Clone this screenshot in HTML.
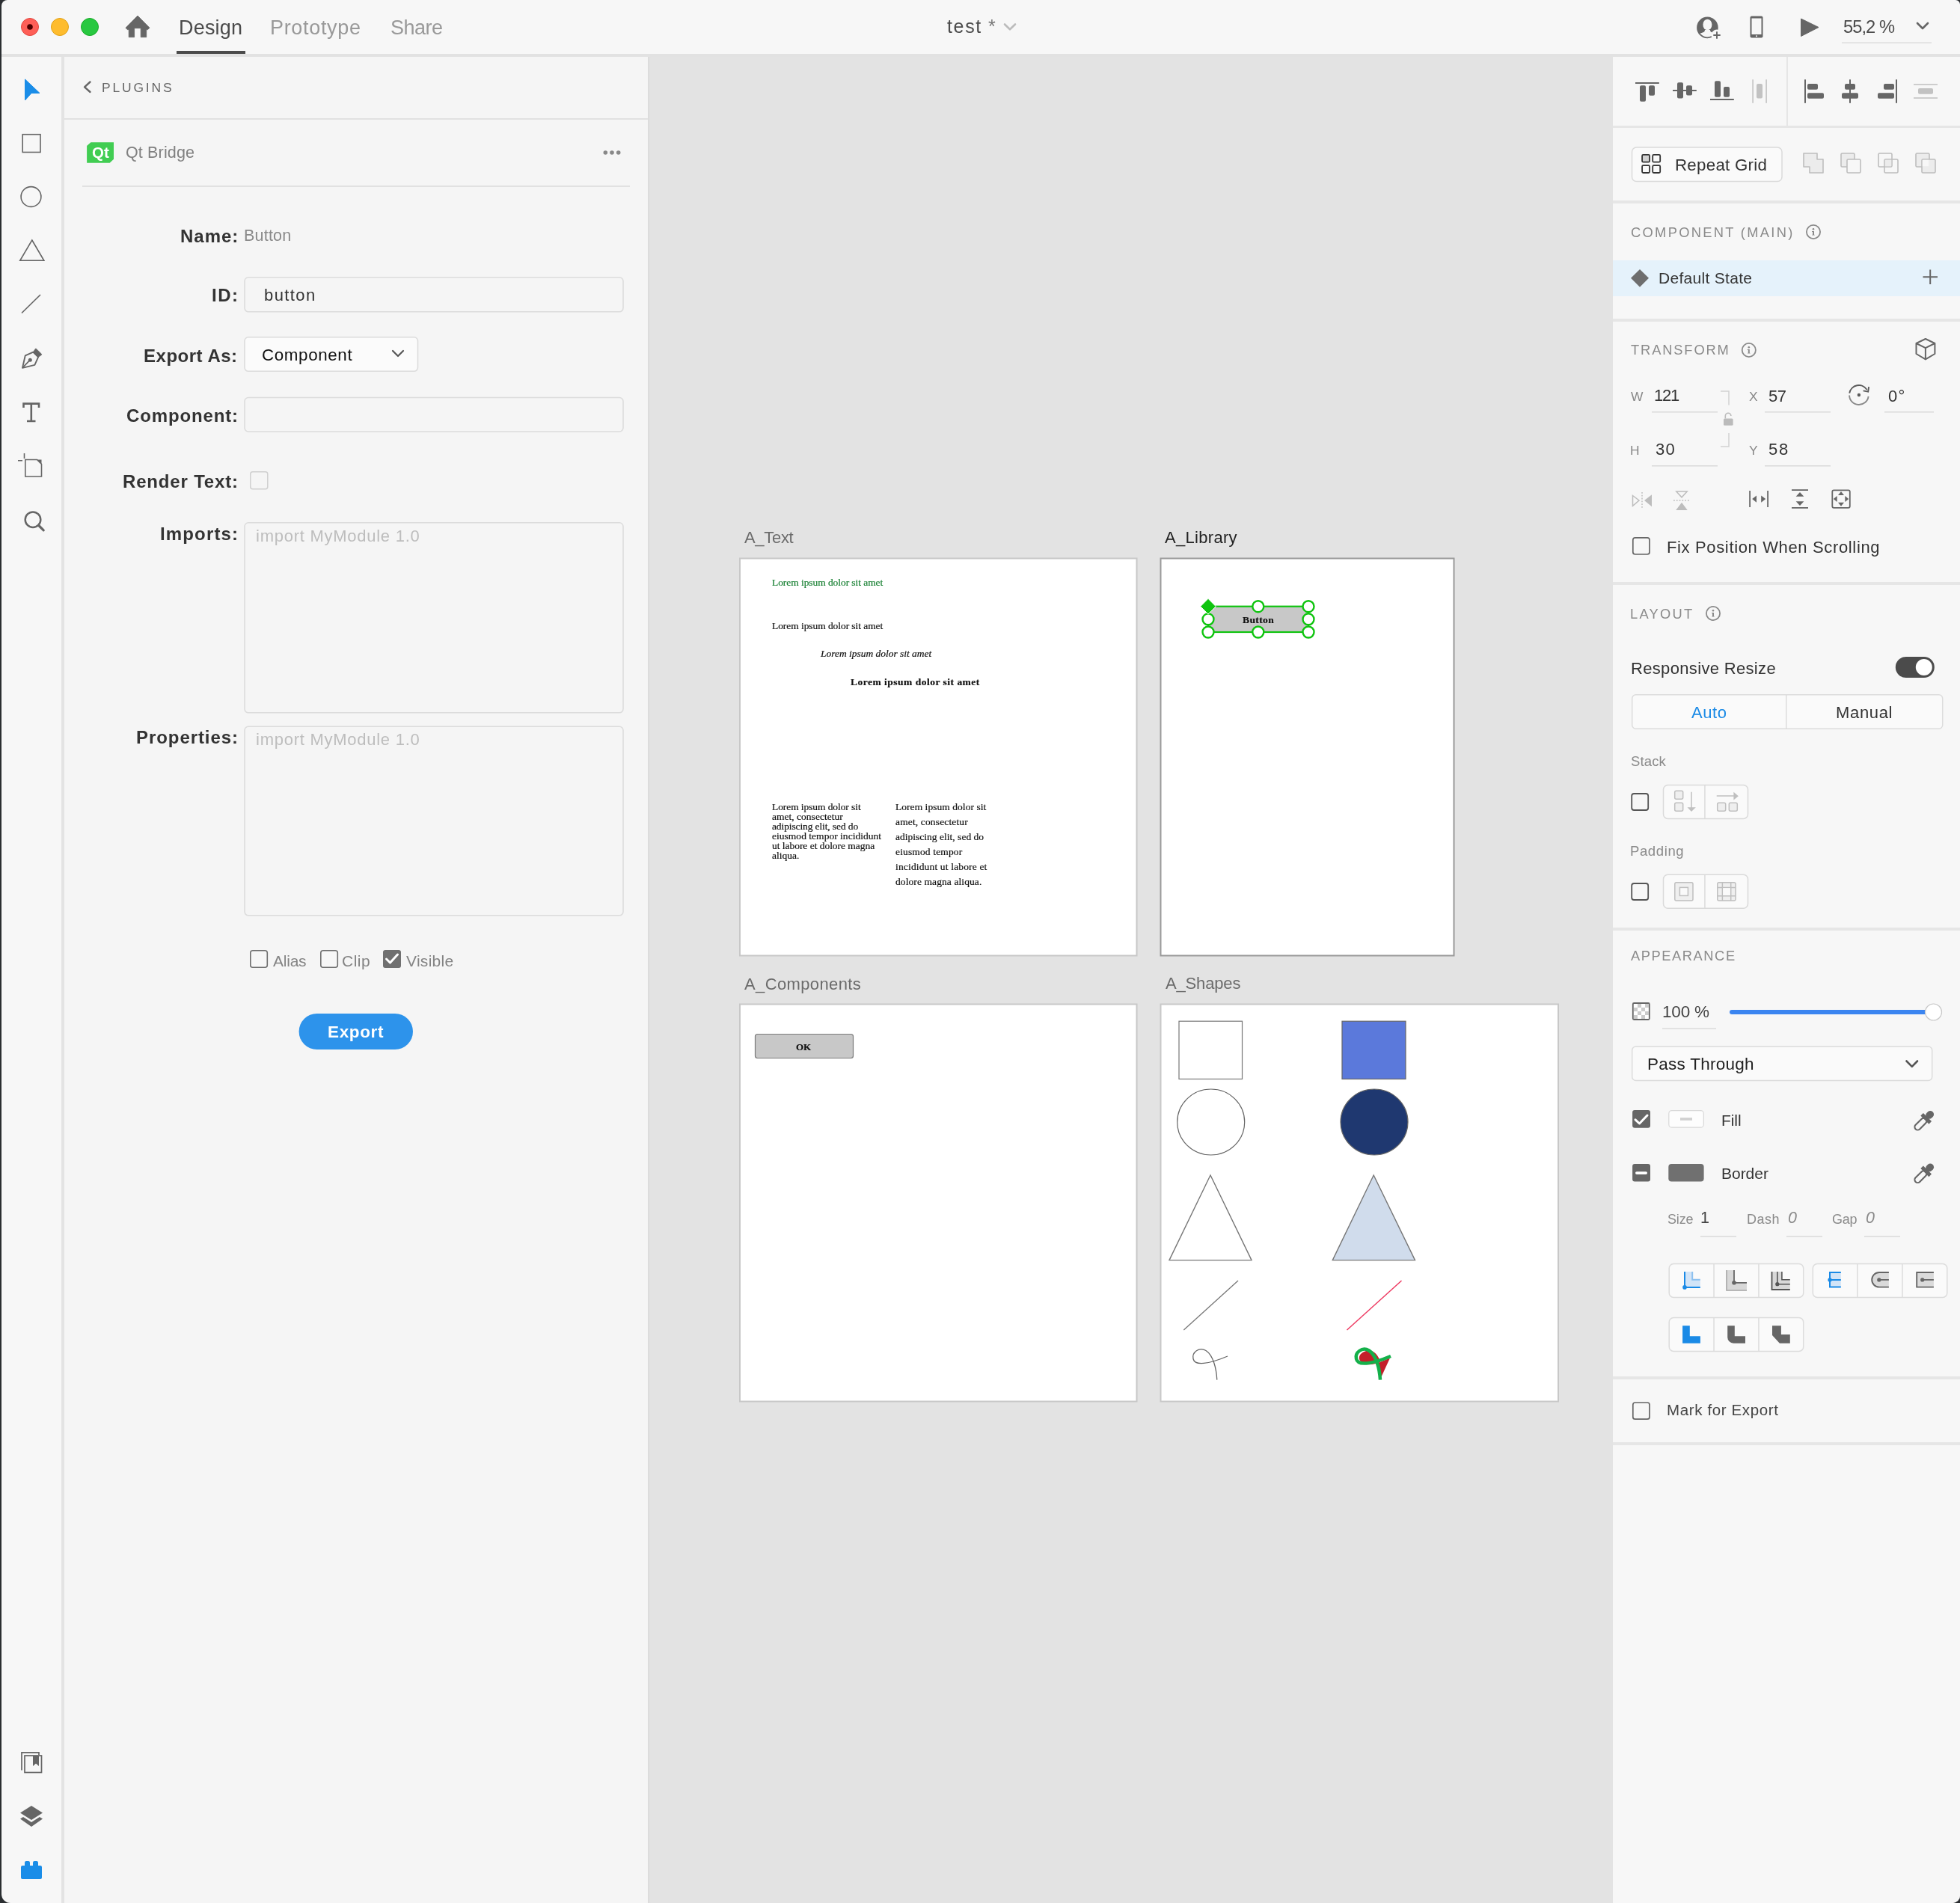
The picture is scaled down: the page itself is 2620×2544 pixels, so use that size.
<!DOCTYPE html>
<html><head><meta charset="utf-8"><title>Adobe XD - test</title>
<style>
html,body{margin:0;padding:0;width:2620px;height:2544px;overflow:hidden;background:#2b2e31;}
body{position:relative;font-family:"Liberation Sans", sans-serif;}
.b{position:absolute;}
.t{position:absolute;white-space:nowrap;will-change:transform;}
svg.ov{position:absolute;left:0;top:0;}
</style></head><body>
<div class="b" style="left:2px;top:0;width:2618px;height:2544px;background:#f7f7f7;border-radius:8px 6px 10px 12px;overflow:hidden">
</div>
<div class="b" style="left:2px;top:72px;width:2618px;height:4px;background:#e2e2e2"></div>
<div class="b" style="left:82px;top:76px;width:4px;height:2468px;background:#e3e3e3"></div>
<div class="b" style="left:86px;top:76px;width:780px;height:2468px;background:#f5f5f5"></div>
<div class="b" style="left:86px;top:158px;width:780px;height:2px;background:#e1e1e1"></div>
<div class="b" style="left:110px;top:248px;width:732px;height:2px;background:#e1e1e1"></div>
<div class="b" style="left:866px;top:76px;width:1290px;height:2468px;background:#e3e3e3;box-shadow:inset 3px 0 3px -2px rgba(0,0,0,0.06)"></div>
<div class="b" style="left:2156px;top:76px;width:464px;height:2468px;background:#f7f7f7;border-bottom-right-radius:10px"></div>
<div class="b" style="left:2156px;top:168px;width:464px;height:3px;background:#e6e6e6"></div>
<div class="b" style="left:2388px;top:76px;width:2px;height:92px;background:#e6e6e6"></div>
<div class="b" style="left:2156px;top:268px;width:464px;height:4px;background:#e6e6e6"></div>
<div class="b" style="left:2156px;top:348px;width:464px;height:48px;background:#e5f2fb"></div>
<div class="b" style="left:2156px;top:426px;width:464px;height:4px;background:#e6e6e6"></div>
<div class="b" style="left:2156px;top:778px;width:464px;height:4px;background:#e6e6e6"></div>
<div class="b" style="left:2156px;top:1240px;width:464px;height:4px;background:#e6e6e6"></div>
<div class="b" style="left:2156px;top:1840px;width:464px;height:4px;background:#e6e6e6"></div>
<div class="b" style="left:2156px;top:1928px;width:464px;height:4px;background:#e6e6e6"></div>

<svg class="ov" width="2620" height="2544" viewBox="0 0 2620 2544">
<!-- traffic lights -->
<circle cx="40" cy="36" r="11.5" fill="#fe5f57" stroke="#e2463f" stroke-width="1"/>
<circle cx="40" cy="36" r="3.8" fill="#4d0000"/>
<circle cx="80" cy="36" r="11.5" fill="#febc2e" stroke="#e1a116" stroke-width="1"/>
<circle cx="120" cy="36" r="11.5" fill="#28c840" stroke="#1aab29" stroke-width="1"/>
<!-- home -->
<path d="M184,21 L200,37.2 L197.5,39.6 L195.7,39.6 L195.7,49.7 L188.2,49.7 L188.2,37.7 L179.6,37.7 L179.6,49.7 L172.2,49.7 L172.2,39.6 L170.2,39.6 L168,37.2 Z" fill="#666" stroke="#666" stroke-width="0.8" stroke-linejoin="round"/>
<!-- design underline -->
<rect x="236" y="68" width="92" height="4" fill="#4b4b4b"/>
<!-- title chevron -->
<path d="M1343,32.5 L1350,39.3 L1357,32.5" fill="none" stroke="#bcbcbc" stroke-width="2.6" stroke-linecap="round" stroke-linejoin="round"/>
<!-- user add -->
<defs>
<clipPath id="uc"><circle cx="2282.4" cy="36.9" r="12.5"/></clipPath>
</defs>
<circle cx="2282.4" cy="36.9" r="14.3" fill="#666"/>
<g clip-path="url(#uc)" fill="#f7f7f7">
<ellipse cx="2282.4" cy="33" rx="6" ry="7.3"/>
<path d="M2279,40 C2279,42 2278,43 2276,43.6 C2271,45 2268,47.5 2266,51 L2299,51 C2297,47.5 2294,45 2289,43.6 C2287,43 2286,42 2286,40 Z"/>
</g>
<circle cx="2295" cy="47" r="7.5" fill="#f7f7f7"/>
<path d="M2290.3,47 L2299.7,47 M2295,42.3 L2295,51.7" stroke="#666" stroke-width="1.9"/>
<!-- phone -->
<rect x="2339.5" y="21.5" width="17" height="29" rx="2" fill="#666"/>
<rect x="2341.5" y="24.5" width="13" height="21.5" fill="#f7f7f7"/>
<circle cx="2348" cy="48.2" r="1" fill="#f7f7f7"/>
<!-- play -->
<path d="M2407.5,25 L2431,36.5 L2407.5,48.5 Z" fill="#666" stroke="#666" stroke-width="1" stroke-linejoin="round"/>
<!-- zoom chevron & underline -->
<path d="M2563,31 L2570,38 L2577,31" fill="none" stroke="#666" stroke-width="2.6" stroke-linecap="round" stroke-linejoin="round"/>
<rect x="2462" y="56.5" width="120" height="1.5" fill="#dcdcdc"/>

<!-- ============ left toolbar ============ -->
<path d="M33.5,106 L53,124.5 L42,124.5 L33.5,134 Z" fill="#1a8de8" stroke="#1a8de8" stroke-width="1" stroke-linejoin="round"/>
<rect x="30.2" y="179.7" width="23.8" height="23.8" fill="none" stroke="#666" stroke-width="1.6"/>
<circle cx="41.5" cy="263" r="13.4" fill="none" stroke="#666" stroke-width="1.6"/>
<path d="M42.8,321 L58.8,348.3 L26.8,348.3 Z" fill="none" stroke="#666" stroke-width="1.6" stroke-linejoin="miter"/>
<path d="M29.5,418 L53.5,394.5" stroke="#666" stroke-width="1.7" stroke-linecap="round"/>
<!-- pen -->
<path d="M30,491.8 L33.8,475.3 L44.5,470.7 L51.2,477.2 L46.4,487.9 Z" fill="none" stroke="#666" stroke-width="1.9" stroke-linejoin="round"/>
<path d="M44.2,471 L47.2,466.3 Q47.8,465.8 48.5,466.3 L55.6,473.3 Q56,474 55.4,474.6 L51.2,477.4 Z" fill="#666" stroke="#666" stroke-width="0.6" stroke-linejoin="round"/>
<circle cx="40.3" cy="481.2" r="2.5" fill="#666"/>
<path d="M40.3,481.2 L30.3,491.3" stroke="#666" stroke-width="1.7"/>
<!-- text T -->
<path d="M31.5,545 L31.5,539.6 L52,539.6 L52,545 M41.8,540 L41.8,563 M36,563 L47.5,563" fill="none" stroke="#666" stroke-width="2.6"/>
<!-- artboard tool -->
<path d="M24,615.8 L30,615.8 M32.5,606 L32.5,613" stroke="#666" stroke-width="1.6"/>
<path d="M33.8,614.5 L49.5,614.5 L55.5,620.5 L55.5,637 L33.8,637 Z" fill="none" stroke="#666" stroke-width="1.6"/>
<path d="M49.5,614.5 L55.5,620.5 L55.5,614.5 Z" fill="#666"/>
<!-- search -->
<circle cx="44" cy="694.7" r="10.3" fill="none" stroke="#666" stroke-width="2.5"/>
<path d="M51.8,702.5 L58.2,708.9" stroke="#666" stroke-width="3.2" stroke-linecap="round"/>
<!-- assets -->
<path d="M29,2366.5 L29,2342.8 L52,2342.8 L52,2346" fill="none" stroke="#666" stroke-width="1.7"/>
<rect x="33" y="2347" width="22.5" height="22.5" fill="#f7f7f7" stroke="#666" stroke-width="1.7"/>
<path d="M44,2347 L52,2347 L52,2361 L48,2357.5 L44,2361 Z" fill="#666"/>
<!-- layers -->
<path d="M42,2414 L57,2423.5 L42,2433 L27,2423.5 Z" fill="#666"/>
<path d="M27,2431.5 L31,2429 L42,2436 L53,2429 L57,2431.5 L42,2442 Z" fill="#666"/>
<!-- plugins (blue) -->
<path d="M30,2494 L33,2494 L33,2490 Q33,2488 35,2488 L38,2488 Q40,2488 40,2490 L40,2494 L44,2494 L44,2490 Q44,2488 46,2488 L49,2488 Q51,2488 51,2490 L51,2494 L54,2494 Q56,2494 56,2496 L56,2510 Q56,2512 54,2512 L30,2512 Q28,2512 28,2510 L28,2496 Q28,2494 30,2494 Z" fill="#1a8de8"/>

<!-- ============ plugin panel ============ -->
<path d="M120.5,109.5 L113,116.3 L120.5,123" fill="none" stroke="#666" stroke-width="2.4" stroke-linecap="round" stroke-linejoin="round"/>
<path d="M121.4,190.2 L152,190.2 L152,212.7 L146.7,217.7 L116.1,217.7 L116.1,195.1 Z" fill="#41cd52"/>
<circle cx="809.3" cy="204" r="2.8" fill="#888"/>
<circle cx="818" cy="204" r="2.8" fill="#888"/>
<circle cx="826.7" cy="204" r="2.8" fill="#888"/>
<!-- inputs -->
<rect x="327" y="370.8" width="506" height="46" rx="5" fill="#f5f5f5" stroke="#dcdcdc" stroke-width="1.6"/>
<rect x="327" y="450.8" width="231.5" height="45.5" rx="5" fill="#fbfbfb" stroke="#dcdcdc" stroke-width="1.6"/>
<path d="M525,469 L532,476 L539,469" fill="none" stroke="#555" stroke-width="2.2" stroke-linecap="round" stroke-linejoin="round"/>
<rect x="327" y="531.5" width="506" height="45.5" rx="5" fill="#f5f5f5" stroke="#dcdcdc" stroke-width="1.6"/>
<rect x="334.8" y="630.8" width="23" height="23" rx="3" fill="#f5f5f5" stroke="#cfcfcf" stroke-width="1.5"/>
<rect x="327" y="698.8" width="506" height="254" rx="5" fill="#f5f5f5" stroke="#dcdcdc" stroke-width="1.6"/>
<rect x="327" y="971.3" width="506" height="252.5" rx="5" fill="#f5f5f5" stroke="#dcdcdc" stroke-width="1.6"/>
<rect x="334.8" y="1270.8" width="22.5" height="22.5" rx="3" fill="#f7f7f7" stroke="#6e6e6e" stroke-width="1.6"/>
<rect x="428.8" y="1270.8" width="22.5" height="22.5" rx="3" fill="#f7f7f7" stroke="#6e6e6e" stroke-width="1.6"/>
<rect x="512" y="1270" width="24" height="24" rx="3" fill="#707070"/>
<path d="M516.5,1282 L521.5,1287 L531.5,1276" fill="none" stroke="#fff" stroke-width="3" stroke-linecap="round" stroke-linejoin="round"/>
<rect x="399.6" y="1355" width="152.4" height="48" rx="24" fill="#2d93eb"/>

<!-- ============ canvas artboards ============ -->
<rect x="989" y="746.5" width="530.5" height="531" fill="#fff" stroke="#c8c8c8" stroke-width="2"/>
<rect x="1551.5" y="746.5" width="392" height="531" fill="#fff" stroke="#9a9a9a" stroke-width="2"/>
<rect x="989" y="1342.5" width="530.5" height="531" fill="#fff" stroke="#c8c8c8" stroke-width="2"/>
<rect x="1551.5" y="1342.5" width="531.5" height="531" fill="#fff" stroke="#c8c8c8" stroke-width="2"/>
<!-- library button w/ selection -->
<rect x="1615" y="810.7" width="134" height="34.3" fill="#c8c8c8"/>
<rect x="1615" y="810.7" width="134" height="34.3" fill="none" stroke="#0fc40f" stroke-width="2.2"/>
<g fill="#fff" stroke="#0fc40f" stroke-width="2.4">
<circle cx="1681.8" cy="810.7" r="7.5"/>
<circle cx="1749" cy="810.7" r="7.5"/>
<circle cx="1615" cy="827.8" r="7.5"/>
<circle cx="1749" cy="827.8" r="7.5"/>
<circle cx="1615" cy="845" r="7.5"/>
<circle cx="1681.8" cy="845" r="7.5"/>
<circle cx="1749" cy="845" r="7.5"/>
</g>
<path d="M1615,800.3 L1625.3,810.7 L1615,821 L1604.7,810.7 Z" fill="#0fc40f" stroke="#fff" stroke-width="1"/>
<!-- OK button -->
<rect x="1009.5" y="1382.5" width="131" height="32" rx="3" fill="#c8c8c8" stroke="#7a7a7a" stroke-width="1.2"/>
<!-- shapes -->
<rect x="1576" y="1365.2" width="84.5" height="77.3" fill="#fff" stroke="#777" stroke-width="1.2"/>
<rect x="1794" y="1365.2" width="85" height="77.3" fill="#5b79db" stroke="#666" stroke-width="1.2"/>
<ellipse cx="1618.7" cy="1500" rx="45" ry="44" fill="#fff" stroke="#666" stroke-width="1.2"/>
<ellipse cx="1837" cy="1500" rx="45" ry="44" fill="#1f3870" stroke="#666" stroke-width="1.2"/>
<path d="M1618,1571 L1673,1684.6 L1563,1684.6 Z" fill="#fff" stroke="#777" stroke-width="1.4" stroke-linejoin="miter"/>
<path d="M1836.2,1571 L1891.5,1684.6 L1781.3,1684.6 Z" fill="#d0dcec" stroke="#777" stroke-width="1.4" stroke-linejoin="miter"/>
<path d="M1582.3,1778 L1655,1712" stroke="#777" stroke-width="1.3"/>
<path d="M1800.5,1778 L1873.5,1712" stroke="#ee3a62" stroke-width="1.5"/>
<path d="M1626.8,1844.6 C1626,1830 1622,1812 1612,1805.5 C1603,1800 1593,1808 1595,1816.5 C1597,1826 1615,1824 1641,1813" fill="none" stroke="#666" stroke-width="1.3"/>
<path d="M1845,1838 C1846,1830 1850,1822 1857,1816 L1845.5,1821 C1842,1812 1838,1806 1830,1805.5 C1822,1805.5 1814,1812 1818,1819 C1822,1826 1835,1825 1845.5,1821 Z" fill="#c41e2a"/>
<path d="M1842.6,1822 L1858,1815.5 L1846.4,1840.8 Z" fill="#c41e2a"/>
<path d="M1845,1844.6 C1844,1830 1840,1812 1830,1805.5 C1821,1800 1811,1808 1813,1816.5 C1815,1826 1833,1824 1859,1813" fill="none" stroke="#14b04a" stroke-width="4.5"/>

<!-- ============ right panel ============ -->
<g fill="#666">
<rect x="2186" y="110" width="31.8" height="2" />
<rect x="2192" y="114.3" width="8" height="21.4" rx="2"/>
<rect x="2204" y="114.3" width="8" height="13.5" rx="2"/>
<rect x="2236" y="120" width="31.8" height="2"/>
<rect x="2242" y="110.2" width="8" height="21.4" rx="2"/>
<rect x="2254" y="114.3" width="8" height="13.3" rx="2"/>
<rect x="2286" y="132" width="31.8" height="2"/>
<rect x="2292" y="108.2" width="8" height="21.6" rx="2"/>
<rect x="2304" y="116" width="8" height="13.8" rx="2"/>
<rect x="2412" y="106.3" width="2" height="31.5"/>
<rect x="2416" y="112" width="14" height="7.7" rx="2"/>
<rect x="2416" y="124.2" width="22" height="7.6" rx="2"/>
<rect x="2472" y="106.3" width="2" height="31.5"/>
<rect x="2466" y="112" width="14" height="7.7" rx="2"/>
<rect x="2462" y="124.2" width="22" height="7.6" rx="2"/>
<rect x="2534" y="106.3" width="2" height="31.5"/>
<rect x="2518" y="112" width="14" height="7.7" rx="2"/>
<rect x="2510" y="124.2" width="22" height="7.6" rx="2"/>
</g>
<g fill="#c2c2c2">
<rect x="2342.3" y="106.3" width="1.6" height="31.5"/>
<rect x="2360.3" y="106.3" width="1.6" height="31.5"/>
<rect x="2348" y="112" width="8" height="19.6" rx="2"/>
<rect x="2558" y="112.2" width="32" height="1.6"/>
<rect x="2558" y="130.2" width="32" height="1.6"/>
<rect x="2564" y="118" width="20" height="7.7" rx="2"/>
</g>
<!-- repeat grid button -->
<rect x="2181.5" y="197" width="200.5" height="45.5" rx="6" fill="#fafafa" stroke="#dadada" stroke-width="1.5"/>
<g stroke="#333" stroke-width="1.8">
<rect x="2195.1" y="206.9" width="10" height="9.8" rx="1.5" fill="#d2d2d2"/>
<rect x="2209.2" y="206.9" width="10" height="9.8" rx="1.5" fill="none"/>
<rect x="2195.1" y="221.2" width="10" height="9.8" rx="1.5" fill="none"/>
<rect x="2209.2" y="221.2" width="10" height="9.8" rx="1.5" fill="none"/>
</g>
<!-- boolean icons -->
<g stroke="#bdbdbd" stroke-width="1.6" fill="#ececec">
<path d="M2411,205 L2429,205 L2429,213 L2437,213 L2437,231 L2419,231 L2419,223 L2411,223 Z" stroke-linejoin="round"/>
<rect x="2461" y="205" width="18" height="18" rx="1.5"/>
<rect x="2469" y="213" width="18" height="18" rx="1.5" fill="#f7f7f7"/>
<rect x="2511" y="205" width="18" height="18" rx="1.5" fill="#f7f7f7"/>
<rect x="2519" y="213" width="18" height="18" rx="1.5" fill="none"/>
<rect x="2519.8" y="213.8" width="8.4" height="8.4" stroke="none" fill="#ececec"/>
<rect x="2561" y="205" width="18" height="18" rx="1.5"/>
<rect x="2569" y="213" width="18" height="18" rx="1.5"/>
<rect x="2569.8" y="213.8" width="8.4" height="8.4" stroke="none" fill="#f7f7f7"/>
</g>
<!-- info icons -->
<g fill="none" stroke="#8a8a8a" stroke-width="1.8">
<circle cx="2424" cy="310" r="9.1"/>
<circle cx="2337.8" cy="468" r="9.1"/>
<circle cx="2290" cy="820" r="9.1"/>
</g>
<g fill="#8a8a8a">
<circle cx="2424" cy="306.2" r="1.3"/><path d="M2422,309 L2425,309 L2425,313.5 L2426,314.6 L2422,314.6 L2423,313.5 L2423,310 L2422,310 Z"/>
<circle cx="2337.8" cy="464.2" r="1.3"/><path d="M2335.8,467 L2338.8,467 L2338.8,471.5 L2339.8,472.6 L2335.8,472.6 L2336.8,471.5 L2336.8,468 L2335.8,468 Z"/>
<circle cx="2290" cy="816.2" r="1.3"/><path d="M2288,819 L2291,819 L2291,823.5 L2292,824.6 L2288,824.6 L2289,823.5 L2289,820 L2288,820 Z"/>
</g>
<!-- default state diamond & plus -->
<path d="M2192,360 L2204,371.8 L2192,383.7 L2180,371.8 Z" fill="#6e6e6e"/>
<path d="M2570.5,370.2 L2590,370.2 M2580.2,360.5 L2580.2,380" stroke="#666" stroke-width="2"/>
<!-- cube -->
<path d="M2573.9,453 L2586.4,459 L2586.4,473 L2573.9,480.4 L2561.5,473 L2561.5,459 Z M2561.5,459 L2573.9,465.2 L2586.4,459 M2573.9,465.2 L2573.9,480.4" fill="none" stroke="#666" stroke-width="2" stroke-linejoin="round"/>
<!-- transform underlines -->
<g fill="#dcdcdc">
<rect x="2208" y="550" width="88" height="1.6"/>
<rect x="2359" y="550" width="88" height="1.6"/>
<rect x="2519" y="550" width="66" height="1.6"/>
<rect x="2208" y="622" width="88" height="1.6"/>
<rect x="2359" y="622" width="88" height="1.6"/>
</g>
<!-- lock bracket -->
<path d="M2300,523 L2311,523 L2311,541.5 M2311,579 L2311,597 L2300,597" fill="none" stroke="#d2d2d2" stroke-width="1.5"/>
<rect x="2304" y="559.4" width="12.6" height="9.4" rx="1.5" fill="#bbb"/>
<path d="M2306.3,559.5 L2306.3,556 A3.8,3.8 0 0 1 2313.9,556" fill="none" stroke="#bbb" stroke-width="1.6"/>
<!-- rotate -->
<path d="M2472.2,525.6 A12.8,12.8 0 0 1 2495.6,521" fill="none" stroke="#5a5a5a" stroke-width="1.9"/>
<path d="M2490.6,522.4 L2497.2,523.6 L2498.1,517.2" fill="none" stroke="#5a5a5a" stroke-width="1.9" stroke-linejoin="miter"/>
<path d="M2472.1,528.4 A12.8,12.8 0 0 0 2497.6,529.8" fill="none" stroke="#8a8a8a" stroke-width="1.9"/>
<circle cx="2484.9" cy="528" r="2.2" fill="#5a5a5a"/>
<!-- flip icons -->
<g fill="#bdbdbd">
<path d="M2182.5,662.5 L2191,669 L2182.5,676.3 Z" fill="none" stroke="#bdbdbd" stroke-width="1.5"/>
<path d="M2198,669 L2208,661.2 L2208,677.2 Z"/>
<path d="M2195,658 L2195,680" stroke="#bdbdbd" stroke-width="1.5" stroke-dasharray="1.8,2"/>
<path d="M2240.8,657 L2255.2,657 L2248,664.8 Z" fill="none" stroke="#bdbdbd" stroke-width="1.5"/>
<path d="M2248,671.8 L2255.7,682.1 L2240.2,682.1 Z"/>
<path d="M2237,669 L2259,669" stroke="#bdbdbd" stroke-width="1.5" stroke-dasharray="1.8,2"/>
</g>
<g fill="#666">
<rect x="2338.2" y="656" width="1.8" height="22"/>
<rect x="2362.2" y="656" width="1.8" height="22"/>
<path d="M2342.2,667.1 L2348,662.5 L2348,671.8 Z"/>
<path d="M2360.2,667.1 L2354.2,662.5 L2354.2,671.8 Z"/>
<rect x="2395" y="654.2" width="22" height="1.8"/>
<rect x="2395" y="678" width="22" height="1.8"/>
<path d="M2406,658 L2411.3,663.7 L2400.7,663.7 Z"/>
<path d="M2406,676 L2411.3,670.2 L2400.7,670.2 Z"/>
<path d="M2461,657.1 L2465,662 L2457,662 Z"/>
<path d="M2461,676.7 L2465,671.8 L2457,671.8 Z"/>
<path d="M2450.8,667 L2455.7,663 L2455.7,671 Z"/>
<path d="M2471.2,667 L2466.3,663 L2466.3,671 Z"/>
</g>
<rect x="2449.3" y="655.3" width="23.5" height="23.5" rx="2" fill="none" stroke="#666" stroke-width="1.8"/>
<!-- checkboxes -->
<rect x="2182.8" y="718.8" width="22.2" height="22.2" rx="3" fill="none" stroke="#666" stroke-width="1.7"/>
<!-- toggle -->
<rect x="2533.8" y="878" width="52" height="28" rx="14" fill="#4b4b4b"/>
<circle cx="2571.8" cy="892" r="11" fill="#fff"/>
<!-- segmented -->
<rect x="2181.7" y="928.8" width="415" height="45.5" rx="5" fill="#fafafa" stroke="#dcdcdc" stroke-width="1.5"/>
<rect x="2387" y="929" width="1.5" height="45" fill="#dcdcdc"/>
<!-- stack/padding -->
<rect x="2181.2" y="1061" width="22" height="22" rx="3" fill="none" stroke="#555" stroke-width="1.8"/>
<rect x="2181.2" y="1181" width="22" height="22" rx="3" fill="none" stroke="#555" stroke-width="1.8"/>
<rect x="2223.5" y="1049.4" width="113" height="45" rx="6" fill="#fafafa" stroke="#dadada" stroke-width="1.5"/>
<rect x="2278.2" y="1049.4" width="1.5" height="45" fill="#dadada"/>
<rect x="2223.5" y="1169.3" width="113" height="45" rx="6" fill="#fafafa" stroke="#dadada" stroke-width="1.5"/>
<rect x="2278.2" y="1169.3" width="1.5" height="45" fill="#dadada"/>
<g stroke="#bfbfbf" stroke-width="1.5" fill="#efefef">
<rect x="2238.7" y="1057.3" width="11" height="11" rx="2"/>
<rect x="2238.7" y="1073.3" width="11" height="11" rx="2"/>
<rect x="2295.7" y="1073.3" width="11" height="11" rx="2"/>
<rect x="2311.3" y="1073.3" width="11" height="11" rx="2"/>
<path d="M2261,1058.8 L2261,1080" fill="none"/>
<path d="M2255.5,1079.3 L2266.8,1079.3 L2261,1085.1 Z" fill="#bfbfbf" stroke="none"/>
<path d="M2294.7,1064 L2318,1064" fill="none"/>
<path d="M2317.4,1058.8 L2323.8,1064.2 L2317.4,1069.5 Z" fill="#bfbfbf" stroke="none"/>
<rect x="2238.8" y="1179.8" width="24.2" height="24.2" rx="2"/>
<rect x="2245.4" y="1186.4" width="11" height="11" fill="#fafafa"/>
<rect x="2295.8" y="1179.8" width="24.2" height="24.2" rx="2"/>
<path d="M2302.4,1180 L2302.4,1204 M2313.7,1180 L2313.7,1204 M2296,1186.4 L2320,1186.4 M2296,1197.8 L2320,1197.8" fill="none"/>
<rect x="2303.2" y="1187.2" width="9.7" height="9.8" stroke="none" fill="#fafafa"/>
</g>
<!-- appearance -->
<rect x="2182.8" y="1341" width="22" height="22" rx="1.5" fill="#fff" stroke="#666" stroke-width="1.8"/>
<g fill="#cccccc">
<rect x="2189" y="1342" width="5" height="5"/><rect x="2199" y="1342" width="5" height="5"/>
<rect x="2184" y="1347" width="5" height="5"/><rect x="2194" y="1347" width="5" height="5"/>
<rect x="2189" y="1352" width="5" height="5"/><rect x="2199" y="1352" width="5" height="5"/>
<rect x="2184" y="1357" width="5" height="5"/><rect x="2194" y="1357" width="5" height="5"/>
</g>
<rect x="2222" y="1374.3" width="72" height="1.6" fill="#dcdcdc"/>
<rect x="2312" y="1350" width="273" height="6" rx="3" fill="#3b85f0"/>
<circle cx="2584.5" cy="1353" r="11" fill="#fff" stroke="#c8c8c8" stroke-width="1.2"/>
<rect x="2181.7" y="1399" width="401" height="45.5" rx="5" fill="#fafafa" stroke="#dcdcdc" stroke-width="1.5"/>
<path d="M2548.5,1418.5 L2555.8,1425.8 L2563,1418.5" fill="none" stroke="#555" stroke-width="2.6" stroke-linecap="round" stroke-linejoin="round"/>
<!-- fill / border -->
<rect x="2182.1" y="1484.1" width="23.9" height="23.7" rx="3" fill="#666"/>
<path d="M2186,1496.8 L2191.5,1502 L2202,1491" fill="none" stroke="#fff" stroke-width="3" stroke-linecap="round" stroke-linejoin="round"/>
<rect x="2230.8" y="1484.6" width="46.5" height="22.6" rx="4" fill="#fdfdfd" stroke="#d8d8d8" stroke-width="1.2"/>
<rect x="2246" y="1494.2" width="16" height="3.6" fill="#d0d0d0"/>
<rect x="2182.1" y="1556" width="23.9" height="23.6" rx="3" fill="#666"/>
<rect x="2186" y="1566.2" width="16" height="3.8" rx="1.9" fill="#fff"/>
<rect x="2230.3" y="1556" width="47.3" height="23.6" rx="4" fill="#707070"/>
<g transform="translate(2572.5,1497.5) rotate(45) scale(1.12)">
<rect x="-3.5" y="-2" width="7" height="17" rx="3.5" fill="none" stroke="#666" stroke-width="1.9"/>
<rect x="-7" y="-5" width="14" height="4.5" fill="#666"/>
<rect x="-4.2" y="-14" width="8.4" height="10" rx="4" fill="#666"/>
</g>
<g transform="translate(2572.5,1568) rotate(45) scale(1.12)">
<rect x="-3.5" y="-2" width="7" height="17" rx="3.5" fill="none" stroke="#666" stroke-width="1.9"/>
<rect x="-7" y="-5" width="14" height="4.5" fill="#666"/>
<rect x="-4.2" y="-14" width="8.4" height="10" rx="4" fill="#666"/>
</g>
<g fill="#dcdcdc">
<rect x="2273" y="1652" width="48" height="1.6"/>
<rect x="2388" y="1652" width="48" height="1.6"/>
<rect x="2492" y="1652" width="48" height="1.6"/>
</g>
<!-- stroke groups -->
<g fill="#fafafa" stroke="#dcdcdc" stroke-width="1.5">
<rect x="2231.2" y="1689.4" width="179.5" height="45" rx="6"/>
<rect x="2423.3" y="1689.4" width="179.5" height="45" rx="6"/>
<rect x="2231.2" y="1761.4" width="179.5" height="45" rx="6"/>
</g>
<g fill="#dcdcdc">
<rect x="2290.3" y="1690" width="1.5" height="44"/><rect x="2350.2" y="1690" width="1.5" height="44"/>
<rect x="2482.1" y="1690" width="1.5" height="44"/><rect x="2542.2" y="1690" width="1.5" height="44"/>
<rect x="2290.3" y="1762" width="1.5" height="44"/><rect x="2350.2" y="1762" width="1.5" height="44"/>
</g>
<!-- inside -->
<path d="M2252,1700 L2262.4,1700 L2262.4,1711 L2272.8,1711 L2272.8,1721.8 L2252,1721.8 Z" fill="#d2e4f7"/>
<path d="M2252,1700 L2252,1720.9 L2272.8,1720.9" fill="none" stroke="#1a8ae6" stroke-width="2"/>
<path d="M2262.2,1700 L2262.2,1710.8 L2272.8,1710.8" fill="none" stroke="#8cc0ef" stroke-width="2"/>
<circle cx="2252" cy="1720.9" r="2.8" fill="#1a8ae6"/>
<!-- center -->
<path d="M2307.3,1698 L2318,1698 L2318,1714.8 L2335,1714.8 L2335,1725.7 L2307.3,1725.7 Z" fill="#d8d8d8"/>
<path d="M2308,1698 L2308,1725 L2335,1725" fill="none" stroke="#aaa" stroke-width="1.6"/>
<path d="M2318,1698 L2318,1714.8 L2335,1714.8" fill="none" stroke="#666" stroke-width="1.8"/>
<circle cx="2318" cy="1714.8" r="2.8" fill="#666"/>
<!-- outside -->
<path d="M2367.6,1700 L2381.9,1700 L2381.9,1710.7 L2392.8,1710.7 L2392.8,1724.7 L2367.6,1724.7 Z" fill="#d8d8d8"/>
<path d="M2368.5,1700 L2368.5,1724 L2392.8,1724" fill="none" stroke="#555" stroke-width="1.8"/>
<path d="M2375.8,1700 L2375.8,1716.7 L2392.8,1716.7" fill="none" stroke="#555" stroke-width="1.6"/>
<path d="M2381.9,1700 L2381.9,1710.7 L2392.8,1710.7" fill="none" stroke="#555" stroke-width="1.6"/>
<circle cx="2375.8" cy="1716.7" r="2.6" fill="#555"/>
<!-- caps -->
<rect x="2446" y="1701" width="14.8" height="19.6" fill="#d2e4f7"/>
<path d="M2460.8,1701 L2446,1701 L2446,1720.6 L2460.8,1720.6 M2446,1710.9 L2460.8,1710.9" fill="none" stroke="#1a8ae6" stroke-width="2"/>
<circle cx="2446" cy="1710.9" r="2.6" fill="#1a8ae6"/>
<path d="M2524.9,1701 L2512,1701 A9.8,9.8 0 0 0 2512,1720.6 L2524.9,1720.6" fill="#dadada" stroke="#666" stroke-width="1.9"/>
<path d="M2511.8,1710.9 L2524.9,1710.9" stroke="#666" stroke-width="1.8"/>
<circle cx="2511.8" cy="1710.9" r="2.6" fill="#666"/>
<path d="M2584.9,1701 L2562.2,1701 L2562.2,1720.6 L2584.9,1720.6" fill="#dadada" stroke="#666" stroke-width="1.9"/>
<path d="M2569.7,1710.9 L2584.9,1710.9" stroke="#666" stroke-width="1.8"/>
<circle cx="2569.7" cy="1710.9" r="2.6" fill="#666"/>
<!-- joins -->
<path d="M2249.1,1772.2 L2258.8,1772.2 L2258.8,1786.2 L2272.9,1786.2 L2272.9,1795.7 L2249.1,1795.7 Z" fill="#1a8ae6"/>
<path d="M2309.2,1772.2 L2318.8,1772.2 L2318.8,1786.2 L2333,1786.2 L2333,1795.7 L2317.2,1795.7 A8,8 0 0 1 2309.2,1787.7 Z" fill="#666"/>
<path d="M2369,1772.2 L2380.9,1772.2 L2380.9,1784.1 L2392.8,1784.1 L2392.8,1795.7 L2378.9,1795.7 L2369,1785 Z" fill="#666"/>
<!-- mark for export -->
<rect x="2182.8" y="1875" width="22.2" height="22.2" rx="3" fill="none" stroke="#666" stroke-width="1.7"/>
</svg>

<span class="t" style='left:239.00px;top:23.74px;font-size:27.00px;line-height:27.00px;color:#4b4b4b;letter-spacing:0.194px'>Design</span>
<span class="t" style='left:361.00px;top:23.74px;font-size:27.00px;line-height:27.00px;color:#999999;letter-spacing:0.681px'>Prototype</span>
<span class="t" style='left:522.00px;top:23.74px;font-size:27.00px;line-height:27.00px;color:#999999;letter-spacing:-0.508px'>Share</span>
<span class="t" style='left:1266.00px;top:23.44px;font-size:25.00px;line-height:25.00px;color:#4b4b4b;letter-spacing:1.650px'>test</span>
<span class="t" style='left:1320.80px;top:23.44px;font-size:25.00px;line-height:25.00px;color:#777777'>*</span>
<span class="t" style='left:2463.70px;top:24.54px;font-size:23.70px;line-height:23.70px;color:#4b4b4b;letter-spacing:-0.937px'>55,2 %</span>
<span class="t" style='left:136.00px;top:108.87px;font-size:17.40px;line-height:17.40px;color:#666666;letter-spacing:2.875px'>PLUGINS</span>
<span class="t" style='left:168.00px;top:194.40px;font-size:21.50px;line-height:21.50px;color:#808080;letter-spacing:0.142px'>Qt Bridge</span>
<span class="t" style='left:123.00px;top:194.25px;font-size:20.50px;line-height:20.50px;color:#ffffff;font-weight:700'>Qt</span>
<span class="t" style='left:240.70px;top:304.28px;font-size:24.00px;line-height:24.00px;color:#333333;font-weight:700;letter-spacing:0.983px'>Name:</span>
<span class="t" style='left:326.40px;top:304.90px;font-size:21.50px;line-height:21.50px;color:#8a8a8a;letter-spacing:0.220px'>Button</span>
<span class="t" style='left:283.00px;top:383.28px;font-size:24.00px;line-height:24.00px;color:#333333;font-weight:700;letter-spacing:1.500px'>ID:</span>
<span class="t" style='left:353.00px;top:383.98px;font-size:22.00px;line-height:22.00px;color:#333333;letter-spacing:1.414px'>button</span>
<span class="t" style='left:192.00px;top:464.28px;font-size:24.00px;line-height:24.00px;color:#333333;font-weight:700;letter-spacing:0.516px'>Export As:</span>
<span class="t" style='left:349.60px;top:464.24px;font-size:22.40px;line-height:22.40px;color:#111111;letter-spacing:0.608px'>Component</span>
<span class="t" style='left:169.00px;top:544.28px;font-size:24.00px;line-height:24.00px;color:#333333;font-weight:700;letter-spacing:0.854px'>Component:</span>
<span class="t" style='left:164.00px;top:632.28px;font-size:24.00px;line-height:24.00px;color:#333333;font-weight:700;letter-spacing:0.825px'>Render Text:</span>
<span class="t" style='left:214.00px;top:702.28px;font-size:24.00px;line-height:24.00px;color:#333333;font-weight:700;letter-spacing:1.142px'>Imports:</span>
<span class="t" style='left:341.50px;top:705.98px;font-size:22.00px;line-height:22.00px;color:#bdbdbd;letter-spacing:0.740px'>import MyModule 1.0</span>
<span class="t" style='left:182.00px;top:974.28px;font-size:24.00px;line-height:24.00px;color:#333333;font-weight:700;letter-spacing:0.929px'>Properties:</span>
<span class="t" style='left:341.50px;top:977.98px;font-size:22.00px;line-height:22.00px;color:#bdbdbd;letter-spacing:0.740px'>import MyModule 1.0</span>
<span class="t" style='left:364.50px;top:1273.82px;font-size:21.00px;line-height:21.00px;color:#838383;letter-spacing:-0.229px'>Alias</span>
<span class="t" style='left:457.00px;top:1273.82px;font-size:21.00px;line-height:21.00px;color:#838383;letter-spacing:0.501px'>Clip</span>
<span class="t" style='left:542.50px;top:1273.82px;font-size:21.00px;line-height:21.00px;color:#838383;letter-spacing:0.283px'>Visible</span>
<span class="t" style='left:438.00px;top:1369.05px;font-size:22.50px;line-height:22.50px;color:#ffffff;font-weight:700;letter-spacing:0.647px'>Export</span>
<span class="t" style='left:995.00px;top:708.38px;font-size:22.00px;line-height:22.00px;color:#6b6b6b;letter-spacing:-0.309px'>A_Text</span>
<span class="t" style='left:1557.40px;top:707.98px;font-size:22.00px;line-height:22.00px;color:#222222;letter-spacing:0.306px'>A_Library</span>
<span class="t" style='left:994.60px;top:1304.58px;font-size:22.00px;line-height:22.00px;color:#6b6b6b;letter-spacing:0.378px'>A_Components</span>
<span class="t" style='left:1557.60px;top:1303.98px;font-size:22.00px;line-height:22.00px;color:#6b6b6b;letter-spacing:-0.161px'>A_Shapes</span>
<span class="t" style='left:1032.00px;top:771.89px;font-size:13.50px;line-height:13.50px;color:#167f31;font-family:"Liberation Serif", serif;-webkit-text-stroke:0.2px #167f31;letter-spacing:-0.069px'>Lorem ipsum dolor sit amet</span>
<span class="t" style='left:1032.00px;top:829.79px;font-size:13.50px;line-height:13.50px;color:#111111;font-family:"Liberation Serif", serif;-webkit-text-stroke:0.2px #111111;letter-spacing:-0.069px'>Lorem ipsum dolor sit amet</span>
<span class="t" style='left:1096.50px;top:866.79px;font-size:13.50px;line-height:13.50px;color:#111111;font-family:"Liberation Serif", serif;-webkit-text-stroke:0.2px #111111;font-style:italic;letter-spacing:-0.020px'>Lorem ipsum dolor sit amet</span>
<span class="t" style='left:1136.70px;top:904.59px;font-size:13.50px;line-height:13.50px;color:#111111;font-weight:700;font-family:"Liberation Serif", serif;-webkit-text-stroke:0.2px #111111;letter-spacing:0.494px'>Lorem ipsum dolor sit amet</span>
<span class="t" style='left:1031.70px;top:1071.79px;font-size:13.50px;line-height:13.50px;color:#111111;font-family:"Liberation Serif", serif;-webkit-text-stroke:0.2px #111111;letter-spacing:-0.086px'>Lorem ipsum dolor sit</span>
<span class="t" style='left:1031.70px;top:1084.89px;font-size:13.50px;line-height:13.50px;color:#111111;font-family:"Liberation Serif", serif;-webkit-text-stroke:0.2px #111111;letter-spacing:0.015px'>amet, consectetur</span>
<span class="t" style='left:1031.70px;top:1097.99px;font-size:13.50px;line-height:13.50px;color:#111111;font-family:"Liberation Serif", serif;-webkit-text-stroke:0.2px #111111;letter-spacing:-0.117px'>adipiscing elit, sed do</span>
<span class="t" style='left:1031.70px;top:1111.09px;font-size:13.50px;line-height:13.50px;color:#111111;font-family:"Liberation Serif", serif;-webkit-text-stroke:0.2px #111111;letter-spacing:0.024px'>eiusmod tempor incididunt</span>
<span class="t" style='left:1031.70px;top:1124.19px;font-size:13.50px;line-height:13.50px;color:#111111;font-family:"Liberation Serif", serif;-webkit-text-stroke:0.2px #111111;letter-spacing:-0.031px'>ut labore et dolore magna</span>
<span class="t" style='left:1031.70px;top:1137.29px;font-size:13.50px;line-height:13.50px;color:#111111;font-family:"Liberation Serif", serif;-webkit-text-stroke:0.2px #111111'>aliqua.</span>
<span class="t" style='left:1197.40px;top:1071.79px;font-size:13.50px;line-height:13.50px;color:#111111;font-family:"Liberation Serif", serif;-webkit-text-stroke:0.2px #111111;letter-spacing:0.044px'>Lorem ipsum dolor sit</span>
<span class="t" style='left:1197.40px;top:1091.79px;font-size:13.50px;line-height:13.50px;color:#111111;font-family:"Liberation Serif", serif;-webkit-text-stroke:0.2px #111111;letter-spacing:0.140px'>amet, consectetur</span>
<span class="t" style='left:1197.40px;top:1111.79px;font-size:13.50px;line-height:13.50px;color:#111111;font-family:"Liberation Serif", serif;-webkit-text-stroke:0.2px #111111;letter-spacing:0.015px'>adipiscing elit, sed do</span>
<span class="t" style='left:1197.40px;top:1131.79px;font-size:13.50px;line-height:13.50px;color:#111111;font-family:"Liberation Serif", serif;-webkit-text-stroke:0.2px #111111;letter-spacing:0.141px'>eiusmod tempor</span>
<span class="t" style='left:1197.40px;top:1151.79px;font-size:13.50px;line-height:13.50px;color:#111111;font-family:"Liberation Serif", serif;-webkit-text-stroke:0.2px #111111;letter-spacing:0.159px'>incididunt ut labore et</span>
<span class="t" style='left:1197.40px;top:1171.79px;font-size:13.50px;line-height:13.50px;color:#111111;font-family:"Liberation Serif", serif;-webkit-text-stroke:0.2px #111111;letter-spacing:0.089px'>dolore magna aliqua.</span>
<span class="t" style='left:1660.50px;top:821.79px;font-size:13.50px;line-height:13.50px;color:#111111;font-weight:700;font-family:"Liberation Serif", serif;-webkit-text-stroke:0.2px #111111;letter-spacing:0.389px'>Button</span>
<span class="t" style='left:1064.00px;top:1392.71px;font-size:13.00px;line-height:13.00px;color:#111111;font-weight:700;font-family:"Liberation Serif", serif;-webkit-text-stroke:0.2px #111111'>OK</span>
<span class="t" style='left:2238.80px;top:209.62px;font-size:22.30px;line-height:22.30px;color:#333333;letter-spacing:0.268px'>Repeat Grid</span>
<span class="t" style='left:2180.40px;top:301.91px;font-size:18.30px;line-height:18.30px;color:#8a8a8a;letter-spacing:2.327px'>COMPONENT (MAIN)</span>
<span class="t" style='left:2216.70px;top:361.12px;font-size:21.00px;line-height:21.00px;color:#333333;letter-spacing:0.298px'>Default State</span>
<span class="t" style='left:2180.40px;top:459.41px;font-size:18.30px;line-height:18.30px;color:#8a8a8a;letter-spacing:1.882px'>TRANSFORM</span>
<span class="t" style='left:2180.40px;top:521.67px;font-size:17.40px;line-height:17.40px;color:#888888'>W</span>
<span class="t" style='left:2211.00px;top:518.48px;font-size:22.00px;line-height:22.00px;color:#333333;letter-spacing:-1.235px'>121</span>
<span class="t" style='left:2338.00px;top:521.77px;font-size:17.40px;line-height:17.40px;color:#888888'>X</span>
<span class="t" style='left:2364.40px;top:518.98px;font-size:22.00px;line-height:22.00px;color:#333333;letter-spacing:-0.435px'>57</span>
<span class="t" style='left:2523.80px;top:518.98px;font-size:22.00px;line-height:22.00px;color:#333333;letter-spacing:1.265px'>0°</span>
<span class="t" style='left:2179.40px;top:593.87px;font-size:17.40px;line-height:17.40px;color:#888888'>H</span>
<span class="t" style='left:2213.00px;top:589.98px;font-size:22.00px;line-height:22.00px;color:#333333;letter-spacing:1.265px'>30</span>
<span class="t" style='left:2338.00px;top:593.87px;font-size:17.40px;line-height:17.40px;color:#888888'>Y</span>
<span class="t" style='left:2364.00px;top:589.98px;font-size:22.00px;line-height:22.00px;color:#333333;letter-spacing:1.765px'>58</span>
<span class="t" style='left:2227.70px;top:720.58px;font-size:22.00px;line-height:22.00px;color:#333333;letter-spacing:0.645px'>Fix Position When Scrolling</span>
<span class="t" style='left:2179.40px;top:811.51px;font-size:18.30px;line-height:18.30px;color:#8a8a8a;letter-spacing:2.276px'>LAYOUT</span>
<span class="t" style='left:2180.00px;top:882.58px;font-size:22.00px;line-height:22.00px;color:#333333;letter-spacing:0.333px'>Responsive Resize</span>
<span class="t" style='left:2261.00px;top:941.88px;font-size:22.00px;line-height:22.00px;color:#1a8ae6;letter-spacing:0.593px'>Auto</span>
<span class="t" style='left:2454.40px;top:941.98px;font-size:22.00px;line-height:22.00px;color:#333333;letter-spacing:0.666px'>Manual</span>
<span class="t" style='left:2180.40px;top:1008.94px;font-size:18.50px;line-height:18.50px;color:#8a8a8a;letter-spacing:0.145px'>Stack</span>
<span class="t" style='left:2179.40px;top:1128.54px;font-size:18.50px;line-height:18.50px;color:#8a8a8a;letter-spacing:0.616px'>Padding</span>
<span class="t" style='left:2180.40px;top:1269.01px;font-size:18.30px;line-height:18.30px;color:#8a8a8a;letter-spacing:1.570px'>APPEARANCE</span>
<span class="t" style='left:2221.50px;top:1342.35px;font-size:22.50px;line-height:22.50px;color:#444444;letter-spacing:-0.198px'>100 %</span>
<span class="t" style='left:2202.00px;top:1411.55px;font-size:22.50px;line-height:22.50px;color:#222222;letter-spacing:0.267px'>Pass Through</span>
<span class="t" style='left:2300.70px;top:1486.82px;font-size:21.00px;line-height:21.00px;color:#333333;letter-spacing:-0.086px'>Fill</span>
<span class="t" style='left:2300.70px;top:1557.82px;font-size:21.00px;line-height:21.00px;color:#333333;letter-spacing:-0.028px'>Border</span>
<span class="t" style='left:2228.60px;top:1621.16px;font-size:18.00px;line-height:18.00px;color:#8a8a8a;letter-spacing:-0.135px'>Size</span>
<span class="t" style='left:2272.50px;top:1618.40px;font-size:21.50px;line-height:21.50px;color:#444444'>1</span>
<span class="t" style='left:2335.00px;top:1621.16px;font-size:18.00px;line-height:18.00px;color:#8a8a8a;letter-spacing:0.497px'>Dash</span>
<span class="t" style='left:2390.30px;top:1618.40px;font-size:21.50px;line-height:21.50px;color:#8a8a8a;font-style:italic'>0</span>
<span class="t" style='left:2448.60px;top:1621.16px;font-size:18.00px;line-height:18.00px;color:#8a8a8a;letter-spacing:-0.306px'>Gap</span>
<span class="t" style='left:2494.40px;top:1618.40px;font-size:21.50px;line-height:21.50px;color:#8a8a8a;font-style:italic'>0</span>
<span class="t" style='left:2227.60px;top:1874.65px;font-size:20.50px;line-height:20.50px;color:#444444;letter-spacing:0.627px'>Mark for Export</span>
</body></html>
